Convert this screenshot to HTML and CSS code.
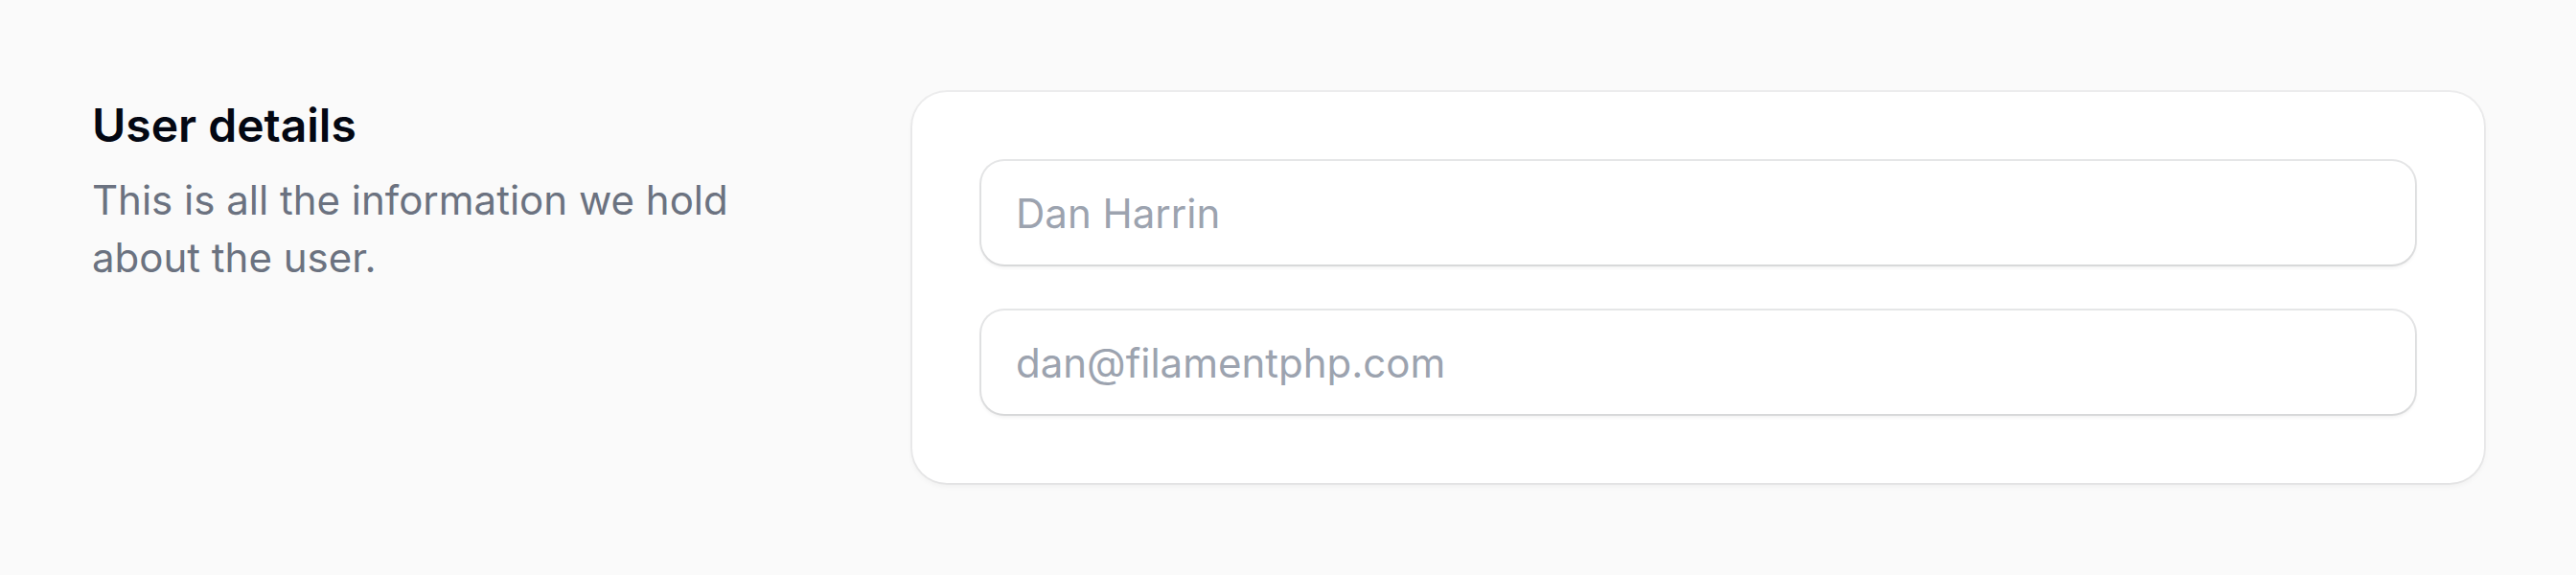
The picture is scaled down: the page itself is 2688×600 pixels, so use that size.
FILE: index.html
```html
<!DOCTYPE html>
<html lang="en">
<head>
<meta charset="utf-8">
<title>User details</title>
<link rel="stylesheet" href="styles.css">
</head>
<body>
<section class="section">
  <div class="aside">
    <h2 class="heading">User details</h2>
    <p class="description">This is all the information we hold about the user.</p>
  </div>
  <div class="card">
    <div class="field"><input class="input" type="text" placeholder="Dan Harrin"></div>
    <div class="field"><input class="input" type="email" placeholder="dan@filamentphp.com"></div>
  </div>
</section>
</body>
</html>
```
FILE: styles.css
```css
html, body {
  margin: 0;
  padding: 0;
}
body {
  background: #fafafa;
  font-family: Inter, "Noto Sans", sans-serif;
  height: 600px;
  box-sizing: border-box;
  padding: 96px 96px;
}
.section {
  display: grid;
  grid-template-columns: repeat(3, minmax(0, 1fr));
  column-gap: 72px;
  align-items: start;
}
.aside {
  grid-column: span 1;
  margin-top: -1px;
}
.heading {
  margin: 0;
  font-size: 48px;
  line-height: 72px;
  font-weight: 600;
  color: #030712;
}
.description {
  margin: 12px 0 0;
  font-size: 42px;
  line-height: 60px;
  color: #6b7280;
}
.card {
  grid-column: span 2;
  background: #ffffff;
  border-radius: 36px;
  box-shadow: 0 0 0 2px rgba(3, 7, 18, 0.05), 0 3px 6px rgba(0, 0, 0, 0.05);
  padding: 72px;
  display: flex;
  flex-direction: column;
  gap: 48px;
}
.field {
  background: #ffffff;
  border-radius: 24px;
  box-shadow: 0 0 0 2px rgba(3, 7, 18, 0.1), 0 3px 4px rgba(0, 0, 0, 0.07);
  display: flex;
}
.input {
  flex: 1;
  min-width: 0;
  border: 0;
  outline: none;
  background: transparent;
  font-family: Inter, "Noto Sans", sans-serif;
  font-size: 42px;
  line-height: 72px;
  height: 108px;
  box-sizing: border-box;
  padding: 18px 36px;
  color: #030712;
  border-radius: 24px;
}
.input::placeholder {
  color: #9ca3af;
  opacity: 1;
}
```
